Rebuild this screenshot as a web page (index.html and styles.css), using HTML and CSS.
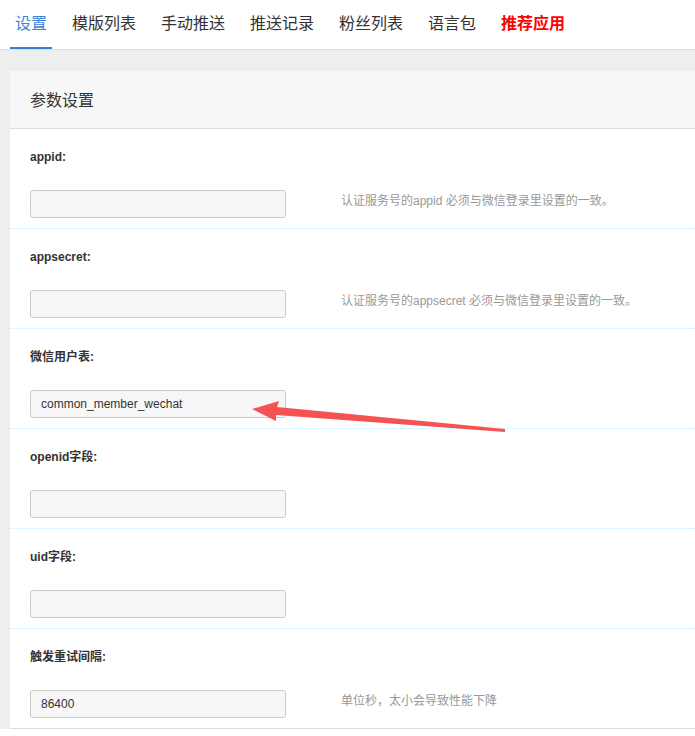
FILE: index.html
```html
<!DOCTYPE html>
<html lang="zh-CN">
<head>
<meta charset="utf-8">
<title>参数设置</title>
<link rel="stylesheet" href="styles.css">
</head>
<body>
<nav class="tabs">
  <a class="tab active">设置</a>
  <a class="tab">模版列表</a>
  <a class="tab">手动推送</a>
  <a class="tab">推送记录</a>
  <a class="tab">粉丝列表</a>
  <a class="tab">语言包</a>
  <a class="tab hot">推荐应用</a>
</nav>
<main class="wrap">
  <section class="panel">
    <header class="panel-head">参数设置</header>
    <div class="row">
      <label class="label">appid:</label>
      <div class="field">
        <input class="input" type="text" value="">
        <span class="hint">认证服务号的appid 必须与微信登录里设置的一致。</span>
      </div>
    </div>
    <div class="row">
      <label class="label">appsecret:</label>
      <div class="field">
        <input class="input" type="text" value="">
        <span class="hint">认证服务号的appsecret 必须与微信登录里设置的一致。</span>
      </div>
    </div>
    <div class="row">
      <label class="label">微信用户表:</label>
      <div class="field">
        <input class="input" type="text" value="common_member_wechat">
      </div>
    </div>
    <div class="row">
      <label class="label">openid字段:</label>
      <div class="field">
        <input class="input" type="text" value="">
      </div>
    </div>
    <div class="row">
      <label class="label">uid字段:</label>
      <div class="field">
        <input class="input" type="text" value="">
      </div>
    </div>
    <div class="row last">
      <label class="label">触发重试间隔:</label>
      <div class="field">
        <input class="input" type="text" value="86400">
        <span class="hint">单位秒，太小会导致性能下降</span>
      </div>
    </div>
  </section>
</main>
<svg class="arrow" width="695" height="736" viewBox="0 0 695 736" aria-hidden="true">
  <polygon points="252,409 279,401 277,407 505,429 505,432 276,415 276,421" fill="#f55353"/>
</svg>
</body>
</html>
```

FILE: styles.css
```css
* { box-sizing: border-box; }
html, body { margin: 0; padding: 0; background: #fff; }
body {
  font-family: "Liberation Sans", "Noto Sans CJK SC", sans-serif;
  color: #333;
  font-size: 12px;
  overflow: hidden;
  width: 695px;
  height: 736px;
}
.tabs {
  display: flex;
  padding-left: 10px;
  height: 50px;
  border-bottom: 1px solid #ddd;
  background: #fff;
}
.tab {
  display: block;
  height: 49px;
  line-height: 44px;
  padding: 0 5px 0 5px;
  margin-right: 15px;
  font-size: 16px;
  color: #333;
  font-family: "Noto Sans CJK SC", sans-serif;
  border-bottom: 2px solid transparent;
}
.tab.active { color: #3a86d6; border-bottom-color: #2f80d3; }
.tab.hot { color: #ff0000; font-weight: bold; }
.wrap {
  background: #eee;
  padding: 21px 0 0 10px;
}
.panel {
  background: #fff;
  border-bottom: 1px solid #ddd;
}
.panel-head {
  height: 58px;
  line-height: 56px;
  background: #f7f7f7;
  border-bottom: 1px solid #ddd;
  padding-left: 20px;
  font-size: 16px;
  font-family: "Noto Sans CJK SC", sans-serif;
  color: #333;
}
.row {
  padding: 18px 20px 10px 20px;
  border-bottom: 1px dotted #cde8fb;
}
.row.last { border-bottom: none; }
.label {
  display: block;
  height: 20px;
  line-height: 20px;
  font-weight: bold;
  font-size: 12px;
  color: #333;
}
.field {
  display: flex;
  align-items: flex-start;
  gap: 55px;
  margin-top: 23px;
}
.input {
  width: 256px;
  height: 28px;
  margin: 0;
  padding: 0 10px;
  border: 1px solid #ccc;
  border-radius: 3px;
  background: #f7f7f7;
  font-family: "Liberation Sans", sans-serif;
  font-size: 12px;
  color: #333;
  outline: none;
}
.hint {
  line-height: 22px;
  color: #999;
  font-size: 12px;
}
.arrow {
  position: absolute;
  left: 0;
  top: 0;
  pointer-events: none;
}
```
